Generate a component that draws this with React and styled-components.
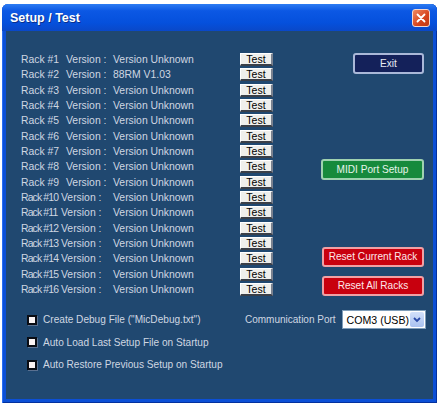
import React from "react"
import styled, { createGlobalStyle } from "styled-components"

const GlobalStyle = createGlobalStyle`
  html, body {
    margin: 0;
    padding: 0;
    background: #ffffff;
  }
  body {
    font-family: "Liberation Sans", Arial, sans-serif;
  }
`

const Window = styled.div`
  margin: 4px 0 0 2px;
  width: 435px;
  height: 399px;
  box-sizing: border-box;
  display: flex;
  flex-direction: column;
  background: #0b4fd6;
  border-radius: 6px 6px 0 0;
  padding: 0 4px 4px 4px;
  box-shadow: inset 1px 0 0 #2a6ef0, inset -1px 0 0 #03319e, inset 0 -1px 0 #03319e;
`

const TitleBar = styled.div`
  height: 27px;
  display: flex;
  align-items: center;
  justify-content: space-between;
  padding: 0 4px 0 4px;
  background: linear-gradient(#2d7cf2 0%, #0c58e4 25%, #0550dc 70%, #0a48c8 100%);
  margin: 0 -4px;
  border-radius: 6px 6px 0 0;
`

const Title = styled.span`
  color: #ffffff;
  font-weight: bold;
  font-size: 12.5px;
  padding-left: 4px;
  text-shadow: 1px 1px 0 #0a2f8a;
`

const CloseButton = styled.div`
  width: 16px;
  height: 16px;
  margin-right: 3px;
  border: 1px solid #f4d8d0;
  border-radius: 3px;
  background: linear-gradient(135deg, #f08a62, #d6431c 60%, #c23a14);
  display: flex;
  align-items: center;
  justify-content: center;
`

const Body = styled.div`
  flex: 1;
  background: #204870;
  padding: 21px 0 0 15px;
  font-size: 10.4px;
  color: #cfd7e2;
`

const Main = styled.div`
  display: flex;
  gap: 48px;
`

const RackList = styled.div`
  display: flex;
  flex-direction: column;
`

const RackRow = styled.div`
  height: 15.33px;
  display: grid;
  grid-template-columns: 92px 127px 33px;
  align-items: center;
  white-space: nowrap;
`

const RackName = styled.span`
  display: inline-block;
  width: ${(p) => (p.$short ? "45px" : "40px")};
  letter-spacing: ${(p) => (p.$short ? "0" : "-0.85px")};
`

const TestButton = styled.button`
  all: unset;
  box-sizing: border-box;
  width: 33px;
  height: 13px;
  background: #efefec;
  border-top: 1px solid #ffffff;
  border-left: 1px solid #ffffff;
  border-right: 2px solid #7a8290;
  border-bottom: 2px solid #3a3f48;
  color: #000000;
  font-family: "Liberation Sans", Arial, sans-serif;
  font-size: 10.5px;
  line-height: 10px;
  text-align: center;
`

const SideColumn = styled.div`
  width: 103px;
  display: flex;
  flex-direction: column;
  align-items: flex-end;
`

const tones = {
  navy: { bg: "#14215a", edge: "#aab8d8", text: "#e8ecf4" },
  green: { bg: "#168a3c", edge: "#9fd2b0", text: "#e6f4ea" },
  red: { bg: "#c8000e", edge: "#f0a0a4", text: "#fde8ea" },
}

const ActionButton = styled.button`
  all: unset;
  box-sizing: border-box;
  width: ${(p) => p.$width}px;
  height: ${(p) => p.$height}px;
  margin-top: ${(p) => p.$top}px;
  background: ${(p) => tones[p.$tone].bg};
  border: 2px solid ${(p) => tones[p.$tone].edge};
  border-radius: 3px;
  color: ${(p) => tones[p.$tone].text};
  font-family: "Liberation Sans", Arial, sans-serif;
  font-size: 10.1px;
  text-align: center;
  line-height: 16px;
`

const Footer = styled.div`
  display: flex;
  margin-top: 11px;
`

const CheckList = styled.div`
  width: 218px;
  padding-left: 6px;
  display: flex;
  flex-direction: column;
`

const CheckRow = styled.label`
  height: 22.5px;
  display: flex;
  align-items: center;
  gap: 6px;
  font-size: 10.1px;
  white-space: nowrap;
`

const Box = styled.span`
  box-sizing: border-box;
  width: 10px;
  height: 10px;
  background: #fbf4f4;
  border: 2px solid #0a0d14;
  box-shadow: 1px 1px 0 #5a7090;
`

const PortRow = styled.div`
  display: flex;
  align-items: center;
  height: 19px;
  margin-top: 2px;
  gap: 6px;
  font-size: 10px;
  white-space: nowrap;
`

const Select = styled.div`
  box-sizing: border-box;
  width: 84px;
  height: 19px;
  display: flex;
  align-items: center;
  justify-content: space-between;
  background: #ffffff;
  border: 1px solid #7f9db9;
  padding: 1px 1px 1px 4px;
  color: #000000;
  font-size: 10.6px;
`

const DropArrow = styled.span`
  width: 14px;
  height: 15px;
  border-radius: 2px;
  background: linear-gradient(#d2e0fa, #aac2f0);
  display: flex;
  align-items: center;
  justify-content: center;
`

const versions = { 2: "88RM V1.03" }

export default function App() {
  const racks = Array.from({ length: 16 }, (_, i) => i + 1)

  return (
    <>
      <GlobalStyle />
      <Window>
        <TitleBar>
          <Title>Setup / Test</Title>
          <CloseButton>
            <svg width="10" height="10" viewBox="0 0 10 10">
              <path d="M1.5 1.5 L8.5 8.5 M8.5 1.5 L1.5 8.5" stroke="#fff" strokeWidth="1.8" strokeLinecap="round" />
            </svg>
          </CloseButton>
        </TitleBar>
        <Body>
          <Main>
            <RackList>
              {racks.map((n) => (
                <RackRow key={n}>
                  <span>
                    <RackName $short={n < 10}>Rack #{n}</RackName>Version :
                  </span>
                  <span>{versions[n] || "Version Unknown"}</span>
                  <TestButton>Test</TestButton>
                </RackRow>
              ))}
            </RackList>
            <SideColumn>
              <ActionButton $tone="navy" $width={71} $height={21} $top={1}>Exit</ActionButton>
              <ActionButton $tone="green" $width={103} $height={21} $top={85}>MIDI Port Setup</ActionButton>
              <ActionButton $tone="red" $width={102} $height={20} $top={67}>Reset Current Rack</ActionButton>
              <ActionButton $tone="red" $width={102} $height={20} $top={9}>Reset All Racks</ActionButton>
            </SideColumn>
          </Main>
          <Footer>
            <CheckList>
              <CheckRow><Box />Create Debug File ("MicDebug.txt")</CheckRow>
              <CheckRow><Box />Auto Load Last Setup File on Startup</CheckRow>
              <CheckRow><Box />Auto Restore Previous Setup on Startup</CheckRow>
            </CheckList>
            <PortRow>
              Communication Port
              <Select>
                COM3 (USB)
                <DropArrow>
                  <svg width="8" height="6" viewBox="0 0 8 6">
                    <path d="M1 1 L4 4 L7 1" fill="none" stroke="#2a4aa8" strokeWidth="1.8" />
                  </svg>
                </DropArrow>
              </Select>
            </PortRow>
          </Footer>
        </Body>
      </Window>
    </>
  )
}
